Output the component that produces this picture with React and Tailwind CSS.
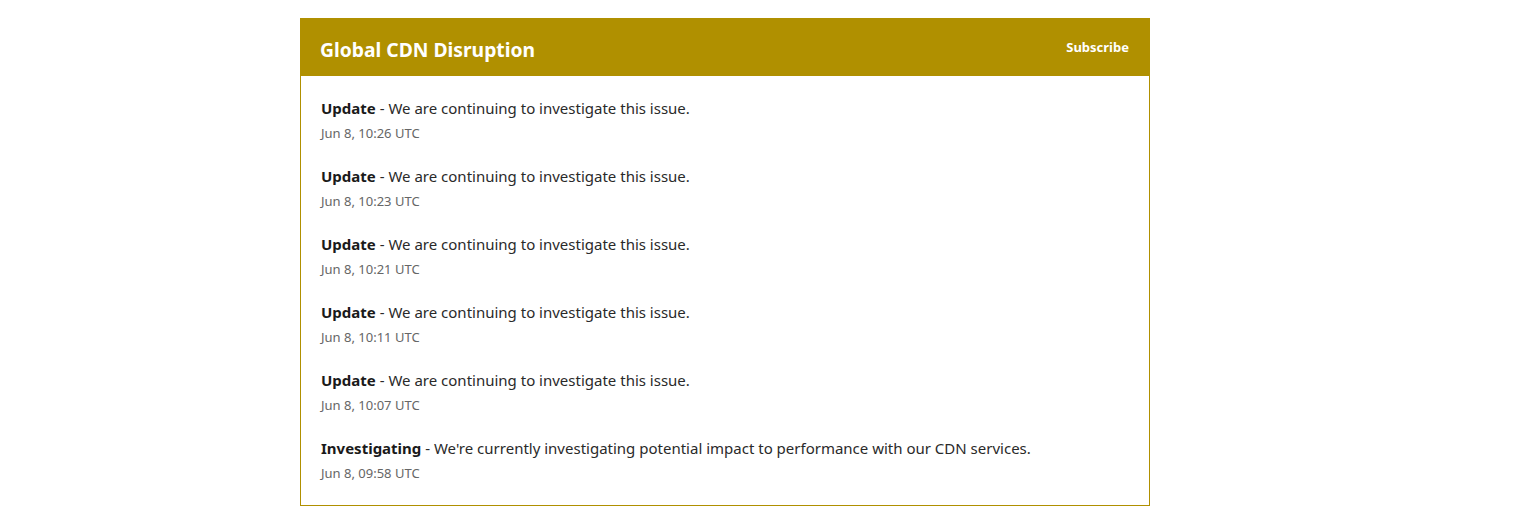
import React from "react";

const updates = [
  { status: "Update", body: "We are continuing to investigate this issue.", time: "Jun 8, 10:26 UTC" },
  { status: "Update", body: "We are continuing to investigate this issue.", time: "Jun 8, 10:23 UTC" },
  { status: "Update", body: "We are continuing to investigate this issue.", time: "Jun 8, 10:21 UTC" },
  { status: "Update", body: "We are continuing to investigate this issue.", time: "Jun 8, 10:11 UTC" },
  { status: "Update", body: "We are continuing to investigate this issue.", time: "Jun 8, 10:07 UTC" },
  {
    status: "Investigating",
    body: "We're currently investigating potential impact to performance with our CDN services.",
    time: "Jun 8, 09:58 UTC",
  },
];

export default function App() {
  return (
    <div className="min-h-[518px] bg-white pt-[18px] font-['Noto_Sans',sans-serif]">
      <div className="ml-[300px] w-[850px] border border-[#b09000]">
        <div className="flex h-[57px] items-center justify-between bg-[#b09000] pl-[19px] pr-[20px]">
          <h1 className="mt-[6px] text-[19.3px] font-bold text-white">Global CDN Disruption</h1>
          <a className="text-[13px] font-bold text-white">Subscribe</a>
        </div>
        <div className="flex flex-col gap-[21px] px-[20px] pb-[22px] pt-[20px]">
          {updates.map((u, i) => (
            <div key={i}>
              <div className="h-[24px] text-[15px] leading-[24px] text-[#2a2a2a]">
                <strong className="font-bold text-[#1a1a1a]">{u.status}</strong> - {u.body}
              </div>
              <div className="mt-[3px] h-[20px] text-[13px] leading-[20px] text-[#666]">{u.time}</div>
            </div>
          ))}
        </div>
      </div>
    </div>
  );
}
